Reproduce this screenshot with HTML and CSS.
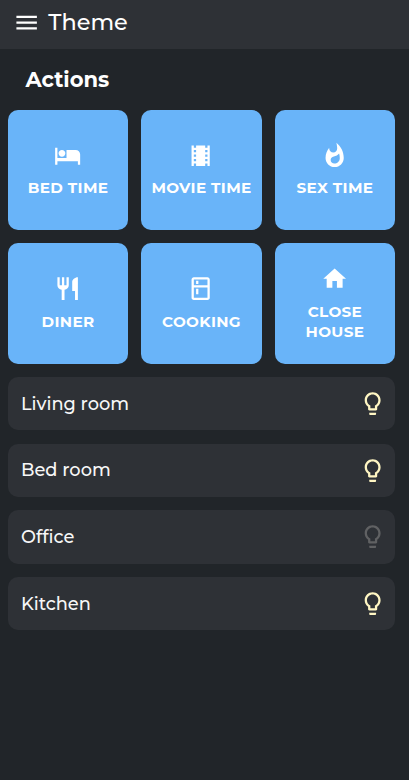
FILE: index.html
```html
<!DOCTYPE html>
<html lang="en">
<head>
<meta charset="utf-8">
<title>Theme</title>
<link rel="stylesheet" href="styles.css">
</head>
<body>
<header class="bar">
  <svg class="icon" viewBox="0 0 24 24"><path d="M3 18h18v-2H3v2zm0-5h18v-2H3v2zm0-7v2h18V6H3z"/></svg>
  <h1 class="title">Theme</h1>
</header>
<main class="content">
  <h2 class="heading">Actions</h2>
  <section class="actions">
    <button class="card"><svg class="icon" viewBox="0 0 24 24"><path d="M7 13c1.66 0 3-1.34 3-3S8.66 7 7 7s-3 1.34-3 3 1.34 3 3 3zm12-6h-8v7H3V5H1v15h2v-3h18v3h2v-9c0-2.21-1.79-4-4-4z"/></svg><span class="label">BED TIME</span></button>
    <button class="card"><svg class="icon" viewBox="0 0 24 24"><path d="M18 3v2h-2V3H8v2H6V3H4v18h2v-2h2v2h8v-2h2v2h2V3h-2zM8 17H6v-2h2v2zm0-4H6v-2h2v2zm0-4H6V7h2v2zm10 8h-2v-2h2v2zm0-4h-2v-2h2v2zm0-4h-2V7h2v2z"/></svg><span class="label">MOVIE TIME</span></button>
    <button class="card"><svg class="icon" viewBox="0 0 24 24"><path d="M13.5.67s.74 2.65.74 4.8c0 2.06-1.35 3.73-3.41 3.73-2.07 0-3.63-1.67-3.63-3.73l.03-.36C5.21 7.51 4 10.62 4 14c0 4.42 3.58 8 8 8s8-3.58 8-8C20 8.61 17.41 3.8 13.5.67zM11.71 19c-1.78 0-3.22-1.4-3.22-3.14 0-1.62 1.05-2.76 2.81-3.12 1.77-.36 3.6-1.21 4.62-2.58.39 1.29.59 2.65.59 4.04 0 2.65-2.15 4.8-4.8 4.8z"/></svg><span class="label">SEX TIME</span></button>
    <button class="card"><svg class="icon" viewBox="0 0 24 24"><path d="M11 9H9V2H7v7H5V2H3v7c0 2.12 1.66 3.84 3.75 3.97V22h2.5v-9.03C11.34 12.84 13 11.12 13 9V2h-2v7zm5-3v8h2.5v8H21V2c-2.76 0-5 2.24-5 4z"/></svg><span class="label">DINER</span></button>
    <button class="card"><svg class="icon" viewBox="0 0 24 24"><path d="M18 2.01L6 2c-1.1 0-2 .89-2 2v16c0 1.1.9 2 2 2h12c1.1 0 2-.9 2-2V4c0-1.11-.9-1.99-2-1.99zM18 20H6v-9.02h12V20zm0-11H6V4h12v5zM8 5h2v3H8V5zm0 7h2v5H8v-5z"/></svg><span class="label">COOKING</span></button>
    <button class="card"><svg class="icon" viewBox="0 0 24 24"><path d="M10 20v-6h4v6h5v-8h3L12 3 2 12h3v8z"/></svg><span class="label">CLOSE<br>HOUSE</span></button>
  </section>
  <ul class="rooms">
    <li class="room"><span class="name">Living room</span><svg class="icon on" viewBox="0 0 24 24"><use href="#bulb"/></svg></li>
    <li class="room"><span class="name">Bed room</span><svg class="icon on" viewBox="0 0 24 24"><use href="#bulb"/></svg></li>
    <li class="room"><span class="name">Office</span><svg class="icon off" viewBox="0 0 24 24"><use href="#bulb"/></svg></li>
    <li class="room"><span class="name">Kitchen</span><svg class="icon on" viewBox="0 0 24 24"><use href="#bulb"/></svg></li>
  </ul>
</main>
<svg width="0" height="0"><defs><path id="bulb" d="M9 21c0 .5.4 1 1 1h4c.6 0 1-.5 1-1v-1H9v1zm3-19C8.1 2 5 5.1 5 9c0 2.4 1.2 4.5 3 5.7V17c0 .5.4 1 1 1h6c.6 0 1-.5 1-1v-2.3c1.8-1.3 3-3.4 3-5.7 0-3.9-3.1-7-7-7zm2.9 11.1l-.9.6V16h-4v-2.3l-.9-.6C7.8 12.2 7 10.6 7 9c0-2.8 2.2-5 5-5s5 2.2 5 5c0 1.6-.8 3.2-2.1 4.1z"/></defs></svg>
</body>
</html>
```
FILE: styles.css
```css
* { box-sizing: border-box; }
body {
  margin: 0;
  min-height: 780px;
  overflow: hidden;
  background: #212529;
  color: #fff;
  font-family: Montserrat, Inter, "Liberation Sans", sans-serif;
}
.icon { width: 27.3px; height: 27.3px; fill: currentColor; flex: none; display: block; }
.bar {
  height: 49px;
  padding: 0 12.5px 5px 12.5px;
  display: flex;
  align-items: center;
  gap: 8.5px;
  background: #2e3136;
}
.bar .icon { margin-top: 1px; }
.title { margin: 0; font-size: 22.4px; line-height: 28px; font-weight: 500; }
.content { padding: 0 14px 0 8px; }
.heading { margin: 0; height: 61px; padding: 17px 0 0 17.5px; font-size: 21.1px; line-height: 28px; font-weight: 700; }
.actions { display: grid; grid-template-columns: repeat(3, 1fr); grid-auto-rows: 120.2px; gap: 13.3px; }
.card {
  border: 0;
  border-radius: 10px;
  padding: 0;
  background: #69b4f9;
  color: #fff;
  font: inherit;
  display: flex;
  flex-direction: column;
  align-items: center;
  justify-content: center;
  gap: 9px;
}
.card .icon { margin-right: 1px; }
.label { font-size: 15.2px; line-height: 20px; font-weight: 700; letter-spacing: .35px; }
.rooms { list-style: none; margin: 13.3px 0 0; padding: 0; display: grid; gap: 13.3px; }
.room {
  height: 53.4px;
  padding: 0 8.5px 0 13px;
  border-radius: 10px;
  background: #2e3136;
  display: flex;
  align-items: center;
  justify-content: space-between;
}
.name { font-size: 17.8px; line-height: 24px; font-weight: 500; color: #f7f7f7; }
.on { color: #fff6c3; }
.off { color: #606163; }
```
